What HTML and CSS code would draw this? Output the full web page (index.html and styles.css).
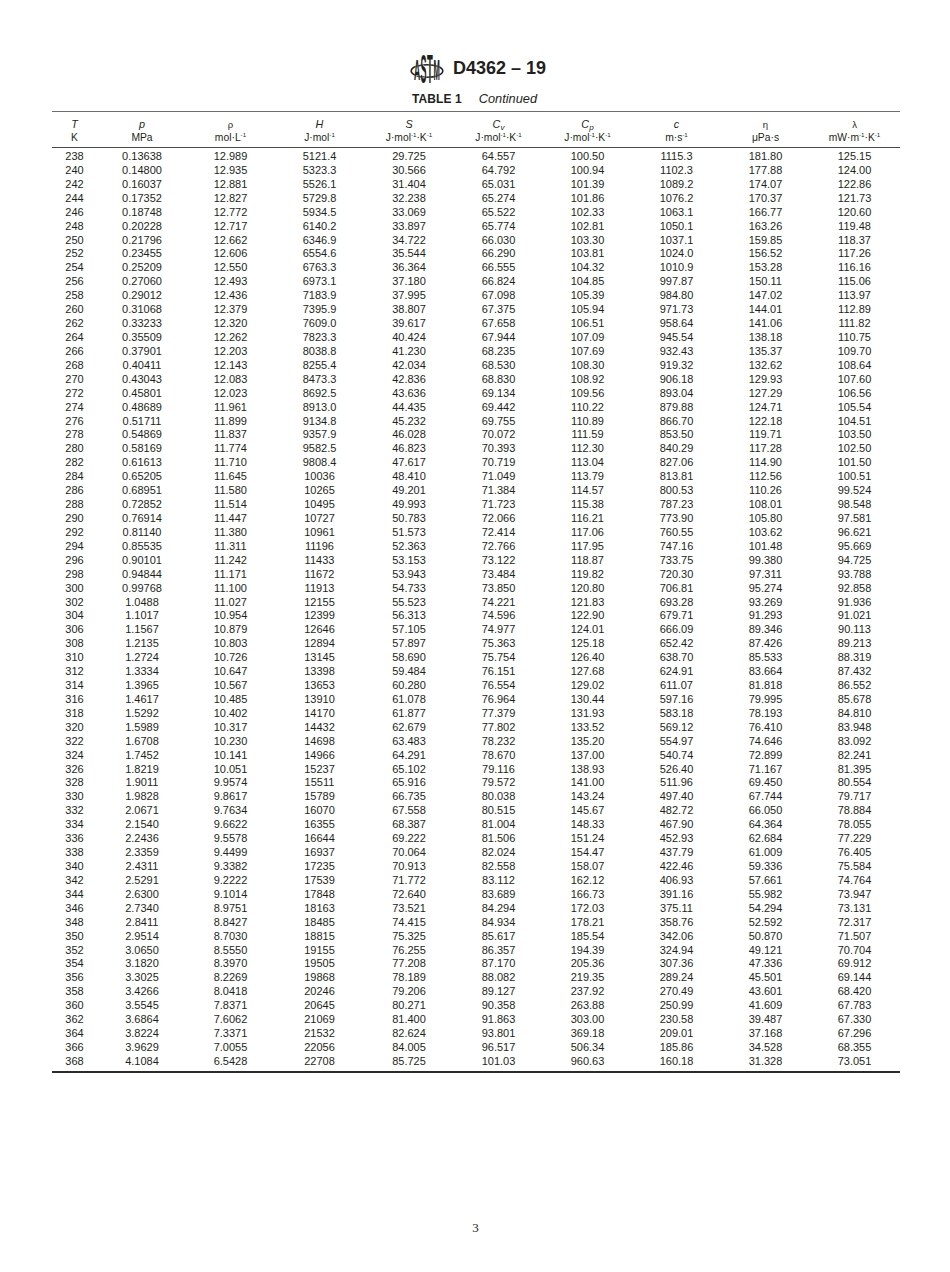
FILE: index.html
```html
<!DOCTYPE html>
<html lang="en">
<head>
<meta charset="utf-8">
<title>D4362 – 19 Table 1 Continued</title>
<link rel="stylesheet" href="styles.css">
</head>
<body>
<div class="page">
  <header class="doc-head">
    <svg class="logo" width="34" height="50" viewBox="0 0 34 50" aria-label="ASTM">
      <ellipse cx="17" cy="29" rx="15.8" ry="6.2" fill="none" stroke="#231f20" stroke-width="1.6"/>
      <g font-family="Liberation Sans, Arial, sans-serif" font-weight="bold" fill="#231f20" stroke="#ffffff" stroke-width="0.35" paint-order="stroke" text-anchor="middle">
        <text transform="translate(7.2,37.5) scale(0.95,3.3)" font-size="9">A</text>
        <text transform="translate(13.6,40.5) scale(1,4.6)" font-size="9">S</text>
        <text transform="translate(19.8,40.5) scale(1.05,4.6)" font-size="9">T</text>
        <text transform="translate(26.6,37.5) scale(0.85,3.3)" font-size="9">M</text>
      </g>
    </svg>
    <span class="doc-title">D4362 – 19</span>
  </header>
  <div class="caption"><span class="cap-label">TABLE 1</span><span class="cap-cont">Continued</span></div>
  <table class="data">
    <colgroup>
      <col class="c1"><col class="c2"><col class="c3"><col class="c4"><col class="c5">
      <col class="c6"><col class="c7"><col class="c8"><col class="c9"><col class="c10">
    </colgroup>
    <thead>
      <tr>
        <th><i>T</i><br>K</th>
        <th><i>p</i><br>MPa</th>
        <th><span class="gr">ρ</span><br>mol·L<sup>-1</sup></th>
        <th><i>H</i><br>J·mol<sup>-1</sup></th>
        <th><i>S</i><br>J·mol<sup>-1</sup>·K<sup>-1</sup></th>
        <th><i>C<sub>v</sub></i><br>J·mol<sup>-1</sup>·K<sup>-1</sup></th>
        <th><i>C<sub>p</sub></i><br>J·mol<sup>-1</sup>·K<sup>-1</sup></th>
        <th><i>c</i><br>m·s<sup>-1</sup></th>
        <th><span class="gr">η</span><br>μPa·s</th>
        <th><span class="gr">λ</span><br>mW·m<sup>-1</sup>·K<sup>-1</sup></th>
      </tr>
    </thead>
    <tbody>
      <tr><td>238</td><td>0.13638</td><td>12.989</td><td>5121.4</td><td>29.725</td><td>64.557</td><td>100.50</td><td>1115.3</td><td>181.80</td><td>125.15</td></tr>
      <tr><td>240</td><td>0.14800</td><td>12.935</td><td>5323.3</td><td>30.566</td><td>64.792</td><td>100.94</td><td>1102.3</td><td>177.88</td><td>124.00</td></tr>
      <tr><td>242</td><td>0.16037</td><td>12.881</td><td>5526.1</td><td>31.404</td><td>65.031</td><td>101.39</td><td>1089.2</td><td>174.07</td><td>122.86</td></tr>
      <tr><td>244</td><td>0.17352</td><td>12.827</td><td>5729.8</td><td>32.238</td><td>65.274</td><td>101.86</td><td>1076.2</td><td>170.37</td><td>121.73</td></tr>
      <tr><td>246</td><td>0.18748</td><td>12.772</td><td>5934.5</td><td>33.069</td><td>65.522</td><td>102.33</td><td>1063.1</td><td>166.77</td><td>120.60</td></tr>
      <tr><td>248</td><td>0.20228</td><td>12.717</td><td>6140.2</td><td>33.897</td><td>65.774</td><td>102.81</td><td>1050.1</td><td>163.26</td><td>119.48</td></tr>
      <tr><td>250</td><td>0.21796</td><td>12.662</td><td>6346.9</td><td>34.722</td><td>66.030</td><td>103.30</td><td>1037.1</td><td>159.85</td><td>118.37</td></tr>
      <tr><td>252</td><td>0.23455</td><td>12.606</td><td>6554.6</td><td>35.544</td><td>66.290</td><td>103.81</td><td>1024.0</td><td>156.52</td><td>117.26</td></tr>
      <tr><td>254</td><td>0.25209</td><td>12.550</td><td>6763.3</td><td>36.364</td><td>66.555</td><td>104.32</td><td>1010.9</td><td>153.28</td><td>116.16</td></tr>
      <tr><td>256</td><td>0.27060</td><td>12.493</td><td>6973.1</td><td>37.180</td><td>66.824</td><td>104.85</td><td>997.87</td><td>150.11</td><td>115.06</td></tr>
      <tr><td>258</td><td>0.29012</td><td>12.436</td><td>7183.9</td><td>37.995</td><td>67.098</td><td>105.39</td><td>984.80</td><td>147.02</td><td>113.97</td></tr>
      <tr><td>260</td><td>0.31068</td><td>12.379</td><td>7395.9</td><td>38.807</td><td>67.375</td><td>105.94</td><td>971.73</td><td>144.01</td><td>112.89</td></tr>
      <tr><td>262</td><td>0.33233</td><td>12.320</td><td>7609.0</td><td>39.617</td><td>67.658</td><td>106.51</td><td>958.64</td><td>141.06</td><td>111.82</td></tr>
      <tr><td>264</td><td>0.35509</td><td>12.262</td><td>7823.3</td><td>40.424</td><td>67.944</td><td>107.09</td><td>945.54</td><td>138.18</td><td>110.75</td></tr>
      <tr><td>266</td><td>0.37901</td><td>12.203</td><td>8038.8</td><td>41.230</td><td>68.235</td><td>107.69</td><td>932.43</td><td>135.37</td><td>109.70</td></tr>
      <tr><td>268</td><td>0.40411</td><td>12.143</td><td>8255.4</td><td>42.034</td><td>68.530</td><td>108.30</td><td>919.32</td><td>132.62</td><td>108.64</td></tr>
      <tr><td>270</td><td>0.43043</td><td>12.083</td><td>8473.3</td><td>42.836</td><td>68.830</td><td>108.92</td><td>906.18</td><td>129.93</td><td>107.60</td></tr>
      <tr><td>272</td><td>0.45801</td><td>12.023</td><td>8692.5</td><td>43.636</td><td>69.134</td><td>109.56</td><td>893.04</td><td>127.29</td><td>106.56</td></tr>
      <tr><td>274</td><td>0.48689</td><td>11.961</td><td>8913.0</td><td>44.435</td><td>69.442</td><td>110.22</td><td>879.88</td><td>124.71</td><td>105.54</td></tr>
      <tr><td>276</td><td>0.51711</td><td>11.899</td><td>9134.8</td><td>45.232</td><td>69.755</td><td>110.89</td><td>866.70</td><td>122.18</td><td>104.51</td></tr>
      <tr><td>278</td><td>0.54869</td><td>11.837</td><td>9357.9</td><td>46.028</td><td>70.072</td><td>111.59</td><td>853.50</td><td>119.71</td><td>103.50</td></tr>
      <tr><td>280</td><td>0.58169</td><td>11.774</td><td>9582.5</td><td>46.823</td><td>70.393</td><td>112.30</td><td>840.29</td><td>117.28</td><td>102.50</td></tr>
      <tr><td>282</td><td>0.61613</td><td>11.710</td><td>9808.4</td><td>47.617</td><td>70.719</td><td>113.04</td><td>827.06</td><td>114.90</td><td>101.50</td></tr>
      <tr><td>284</td><td>0.65205</td><td>11.645</td><td>10036</td><td>48.410</td><td>71.049</td><td>113.79</td><td>813.81</td><td>112.56</td><td>100.51</td></tr>
      <tr><td>286</td><td>0.68951</td><td>11.580</td><td>10265</td><td>49.201</td><td>71.384</td><td>114.57</td><td>800.53</td><td>110.26</td><td>99.524</td></tr>
      <tr><td>288</td><td>0.72852</td><td>11.514</td><td>10495</td><td>49.993</td><td>71.723</td><td>115.38</td><td>787.23</td><td>108.01</td><td>98.548</td></tr>
      <tr><td>290</td><td>0.76914</td><td>11.447</td><td>10727</td><td>50.783</td><td>72.066</td><td>116.21</td><td>773.90</td><td>105.80</td><td>97.581</td></tr>
      <tr><td>292</td><td>0.81140</td><td>11.380</td><td>10961</td><td>51.573</td><td>72.414</td><td>117.06</td><td>760.55</td><td>103.62</td><td>96.621</td></tr>
      <tr><td>294</td><td>0.85535</td><td>11.311</td><td>11196</td><td>52.363</td><td>72.766</td><td>117.95</td><td>747.16</td><td>101.48</td><td>95.669</td></tr>
      <tr><td>296</td><td>0.90101</td><td>11.242</td><td>11433</td><td>53.153</td><td>73.122</td><td>118.87</td><td>733.75</td><td>99.380</td><td>94.725</td></tr>
      <tr><td>298</td><td>0.94844</td><td>11.171</td><td>11672</td><td>53.943</td><td>73.484</td><td>119.82</td><td>720.30</td><td>97.311</td><td>93.788</td></tr>
      <tr><td>300</td><td>0.99768</td><td>11.100</td><td>11913</td><td>54.733</td><td>73.850</td><td>120.80</td><td>706.81</td><td>95.274</td><td>92.858</td></tr>
      <tr><td>302</td><td>1.0488</td><td>11.027</td><td>12155</td><td>55.523</td><td>74.221</td><td>121.83</td><td>693.28</td><td>93.269</td><td>91.936</td></tr>
      <tr><td>304</td><td>1.1017</td><td>10.954</td><td>12399</td><td>56.313</td><td>74.596</td><td>122.90</td><td>679.71</td><td>91.293</td><td>91.021</td></tr>
      <tr><td>306</td><td>1.1567</td><td>10.879</td><td>12646</td><td>57.105</td><td>74.977</td><td>124.01</td><td>666.09</td><td>89.346</td><td>90.113</td></tr>
      <tr><td>308</td><td>1.2135</td><td>10.803</td><td>12894</td><td>57.897</td><td>75.363</td><td>125.18</td><td>652.42</td><td>87.426</td><td>89.213</td></tr>
      <tr><td>310</td><td>1.2724</td><td>10.726</td><td>13145</td><td>58.690</td><td>75.754</td><td>126.40</td><td>638.70</td><td>85.533</td><td>88.319</td></tr>
      <tr><td>312</td><td>1.3334</td><td>10.647</td><td>13398</td><td>59.484</td><td>76.151</td><td>127.68</td><td>624.91</td><td>83.664</td><td>87.432</td></tr>
      <tr><td>314</td><td>1.3965</td><td>10.567</td><td>13653</td><td>60.280</td><td>76.554</td><td>129.02</td><td>611.07</td><td>81.818</td><td>86.552</td></tr>
      <tr><td>316</td><td>1.4617</td><td>10.485</td><td>13910</td><td>61.078</td><td>76.964</td><td>130.44</td><td>597.16</td><td>79.995</td><td>85.678</td></tr>
      <tr><td>318</td><td>1.5292</td><td>10.402</td><td>14170</td><td>61.877</td><td>77.379</td><td>131.93</td><td>583.18</td><td>78.193</td><td>84.810</td></tr>
      <tr><td>320</td><td>1.5989</td><td>10.317</td><td>14432</td><td>62.679</td><td>77.802</td><td>133.52</td><td>569.12</td><td>76.410</td><td>83.948</td></tr>
      <tr><td>322</td><td>1.6708</td><td>10.230</td><td>14698</td><td>63.483</td><td>78.232</td><td>135.20</td><td>554.97</td><td>74.646</td><td>83.092</td></tr>
      <tr><td>324</td><td>1.7452</td><td>10.141</td><td>14966</td><td>64.291</td><td>78.670</td><td>137.00</td><td>540.74</td><td>72.899</td><td>82.241</td></tr>
      <tr><td>326</td><td>1.8219</td><td>10.051</td><td>15237</td><td>65.102</td><td>79.116</td><td>138.93</td><td>526.40</td><td>71.167</td><td>81.395</td></tr>
      <tr><td>328</td><td>1.9011</td><td>9.9574</td><td>15511</td><td>65.916</td><td>79.572</td><td>141.00</td><td>511.96</td><td>69.450</td><td>80.554</td></tr>
      <tr><td>330</td><td>1.9828</td><td>9.8617</td><td>15789</td><td>66.735</td><td>80.038</td><td>143.24</td><td>497.40</td><td>67.744</td><td>79.717</td></tr>
      <tr><td>332</td><td>2.0671</td><td>9.7634</td><td>16070</td><td>67.558</td><td>80.515</td><td>145.67</td><td>482.72</td><td>66.050</td><td>78.884</td></tr>
      <tr><td>334</td><td>2.1540</td><td>9.6622</td><td>16355</td><td>68.387</td><td>81.004</td><td>148.33</td><td>467.90</td><td>64.364</td><td>78.055</td></tr>
      <tr><td>336</td><td>2.2436</td><td>9.5578</td><td>16644</td><td>69.222</td><td>81.506</td><td>151.24</td><td>452.93</td><td>62.684</td><td>77.229</td></tr>
      <tr><td>338</td><td>2.3359</td><td>9.4499</td><td>16937</td><td>70.064</td><td>82.024</td><td>154.47</td><td>437.79</td><td>61.009</td><td>76.405</td></tr>
      <tr><td>340</td><td>2.4311</td><td>9.3382</td><td>17235</td><td>70.913</td><td>82.558</td><td>158.07</td><td>422.46</td><td>59.336</td><td>75.584</td></tr>
      <tr><td>342</td><td>2.5291</td><td>9.2222</td><td>17539</td><td>71.772</td><td>83.112</td><td>162.12</td><td>406.93</td><td>57.661</td><td>74.764</td></tr>
      <tr><td>344</td><td>2.6300</td><td>9.1014</td><td>17848</td><td>72.640</td><td>83.689</td><td>166.73</td><td>391.16</td><td>55.982</td><td>73.947</td></tr>
      <tr><td>346</td><td>2.7340</td><td>8.9751</td><td>18163</td><td>73.521</td><td>84.294</td><td>172.03</td><td>375.11</td><td>54.294</td><td>73.131</td></tr>
      <tr><td>348</td><td>2.8411</td><td>8.8427</td><td>18485</td><td>74.415</td><td>84.934</td><td>178.21</td><td>358.76</td><td>52.592</td><td>72.317</td></tr>
      <tr><td>350</td><td>2.9514</td><td>8.7030</td><td>18815</td><td>75.325</td><td>85.617</td><td>185.54</td><td>342.06</td><td>50.870</td><td>71.507</td></tr>
      <tr><td>352</td><td>3.0650</td><td>8.5550</td><td>19155</td><td>76.255</td><td>86.357</td><td>194.39</td><td>324.94</td><td>49.121</td><td>70.704</td></tr>
      <tr><td>354</td><td>3.1820</td><td>8.3970</td><td>19505</td><td>77.208</td><td>87.170</td><td>205.36</td><td>307.36</td><td>47.336</td><td>69.912</td></tr>
      <tr><td>356</td><td>3.3025</td><td>8.2269</td><td>19868</td><td>78.189</td><td>88.082</td><td>219.35</td><td>289.24</td><td>45.501</td><td>69.144</td></tr>
      <tr><td>358</td><td>3.4266</td><td>8.0418</td><td>20246</td><td>79.206</td><td>89.127</td><td>237.92</td><td>270.49</td><td>43.601</td><td>68.420</td></tr>
      <tr><td>360</td><td>3.5545</td><td>7.8371</td><td>20645</td><td>80.271</td><td>90.358</td><td>263.88</td><td>250.99</td><td>41.609</td><td>67.783</td></tr>
      <tr><td>362</td><td>3.6864</td><td>7.6062</td><td>21069</td><td>81.400</td><td>91.863</td><td>303.00</td><td>230.58</td><td>39.487</td><td>67.330</td></tr>
      <tr><td>364</td><td>3.8224</td><td>7.3371</td><td>21532</td><td>82.624</td><td>93.801</td><td>369.18</td><td>209.01</td><td>37.168</td><td>67.296</td></tr>
      <tr><td>366</td><td>3.9629</td><td>7.0055</td><td>22056</td><td>84.005</td><td>96.517</td><td>506.34</td><td>185.86</td><td>34.528</td><td>68.355</td></tr>
      <tr><td>368</td><td>4.1084</td><td>6.5428</td><td>22708</td><td>85.725</td><td>101.03</td><td>960.63</td><td>160.18</td><td>31.328</td><td>73.051</td></tr>
    </tbody>
  </table>
  <footer class="page-num">3</footer>
</div>
</body>
</html>
```

FILE: styles.css
```css
html, body {
  margin: 0;
  padding: 0;
  background: #ffffff;
}

body {
  color: #231f20;
  font-family: "Liberation Sans", Arial, Helvetica, sans-serif;
}

.page {
  width: 848px;
  margin: 0 auto;
  padding-top: 51px;
  padding-left: 1px;
}

.doc-head {
  display: flex;
  justify-content: center;
  align-items: center;
  gap: 9px;
  height: 31px;
  padding-left: 5px;
}

.logo {
  display: block;
  flex: none;
}

.doc-title {
  font-size: 18px;
  font-weight: bold;
  line-height: 22px;
  padding-top: 2px;
}

.caption {
  margin-top: 10px;
  text-align: center;
  font-size: 12px;
  line-height: 14px;
  padding-right: 2px;
}

.cap-label {
  font-weight: bold;
  letter-spacing: 0.1px;
}

.cap-cont {
  font-style: italic;
  font-size: 12.8px;
  margin-left: 17px;
}

.data {
  margin-top: 5px;
  width: 848px;
  table-layout: fixed;
  border-collapse: separate;
  border-spacing: 0;
}

.c1 { width: 46px; }
.c2 { width: 89px; }
.c3 { width: 88px; }
.c4 { width: 90px; }
.c5 { width: 89px; }
.c6 { width: 90px; }
.c7 { width: 88px; }
.c8 { width: 90px; }
.c9 { width: 88px; }
.c10 { width: 90px; }

.data th {
  font-weight: normal;
  font-size: 10.3px;
  line-height: 13px;
  text-align: center;
  padding: 6px 0 3px 0;
  border-top: 1px solid #6d6d6d;
  border-bottom: 1px solid #4a4a4a;
  white-space: nowrap;
}

.data th i {
  font-size: 10.8px;
}

.data th .gr {
  font-size: 9.5px;
}

.data sup {
  font-size: 6.2px;
  line-height: 0;
  vertical-align: 4px;
}

.data sub {
  font-size: 8px;
  line-height: 0;
  vertical-align: -2px;
}

.data td {
  font-size: 11px;
  line-height: 13.92px;
  height: 13.92px;
  padding: 0;
  text-align: center;
  white-space: nowrap;
}

.data tbody tr:first-child td {
  padding-top: 2px;
}

.data tbody tr:last-child td {
  padding-bottom: 2px;
  border-bottom: 2px solid #2b2b2b;
}

.page-num {
  margin-top: 147px;
  text-align: center;
  font-family: "Liberation Serif", "Times New Roman", serif;
  font-size: 13px;
  line-height: 16px;
}
```
